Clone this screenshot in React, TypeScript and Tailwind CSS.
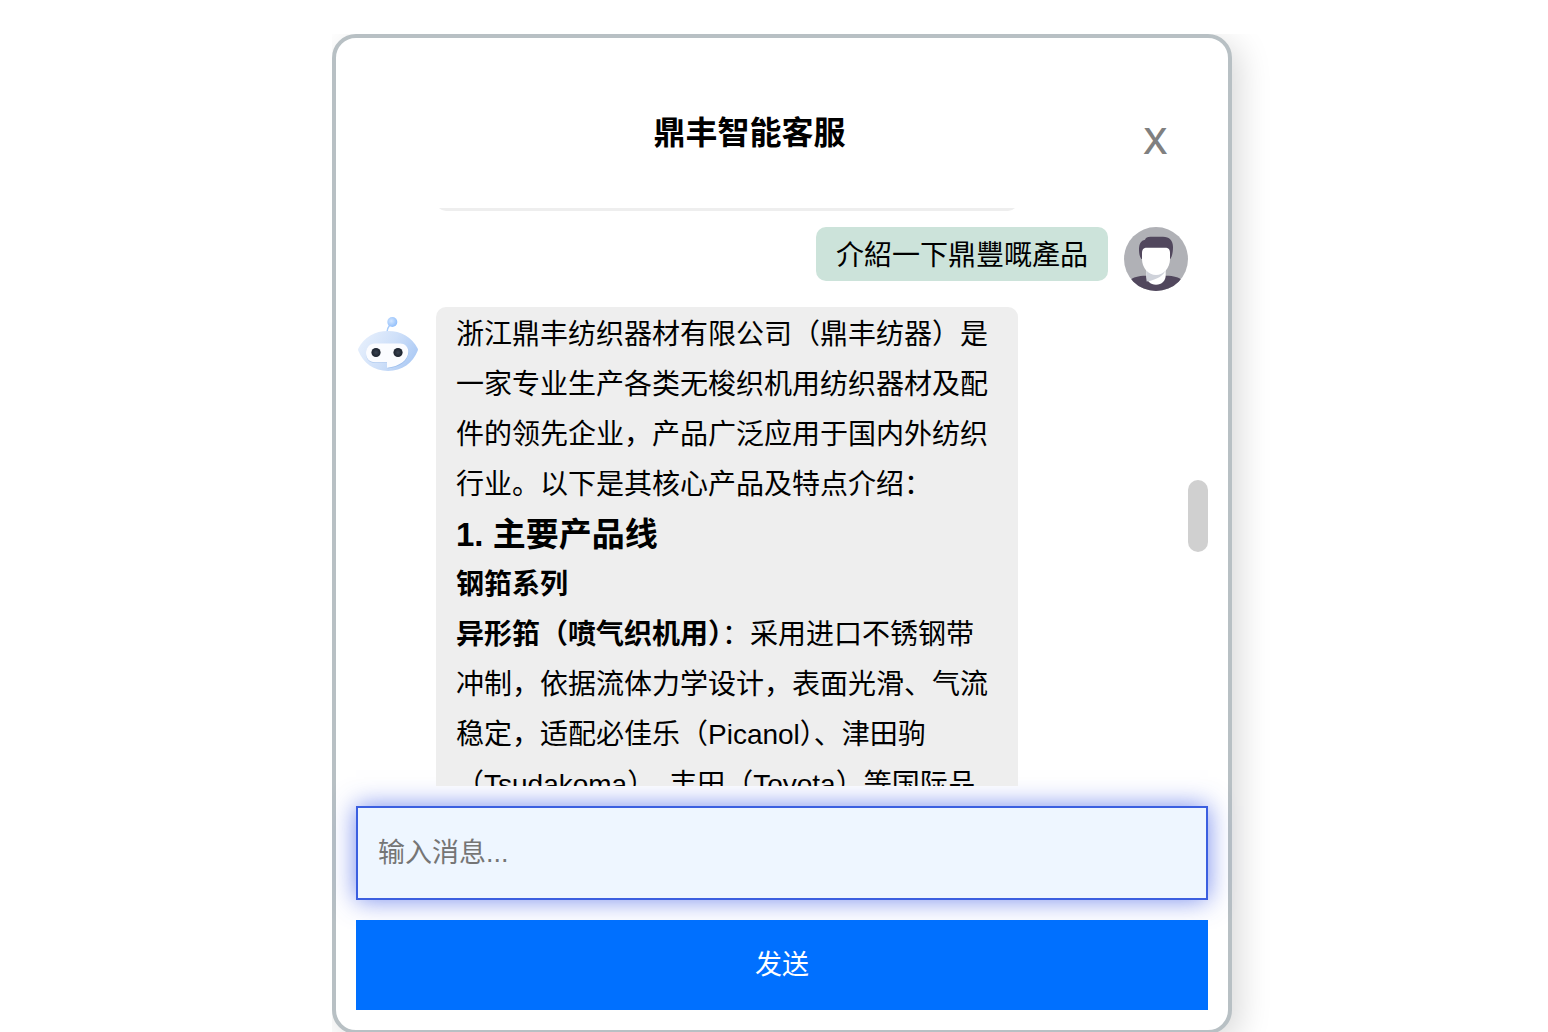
import React, { useState } from 'react';

interface BubbleProps {
  children?: React.ReactNode;
}

const BotAvatar = () => (
  <svg viewBox="0 0 64 64" className="w-16 h-16 shrink-0" role="img" aria-label="客服">
    <defs>
      <linearGradient id="botBody" x1="0" y1="0.3" x2="1" y2="0.7">
        <stop offset="0" stopColor="#e6effc" />
        <stop offset="0.5" stopColor="#cfe0f9" />
        <stop offset="1" stopColor="#a9c8f4" />
      </linearGradient>
      <radialGradient id="botBall" cx="0.4" cy="0.4" r="0.6">
        <stop offset="0" stopColor="#d3e6ff" />
        <stop offset="1" stopColor="#93c0fb" />
      </radialGradient>
      <radialGradient id="botEye">
        <stop offset="0" stopColor="#3a4351" />
        <stop offset="1" stopColor="#1b222d" />
      </radialGradient>
    </defs>
    <path d="M31 25c0-2 .5-4 2.500-6.500" fill="none" stroke="#a9cdfb" strokeWidth="1.500" />
    <circle cx="36.300" cy="15" r="5" fill="url(#botBall)" />
    <path
      d="M2.300 41.500C8 30 19 24 32 24s24 6 29.700 17.500c.4.800.4 1.500 0 2.300C57 56 46 64 32 64S7 56 2.300 43.800c-.4-.8-.4-1.500 0-2.300Z"
      fill="url(#botBody)"
    />
    <path
      d="M19 37h25c5 0 8.500 3.500 8.500 8 0 9-9 15.500-21 16.500v-5.500H19c-5.500 0-9-4-9-9.500S13.500 37 19 37Z"
      fill="#7fa9e3"
      opacity="0.45"
    />
    <path
      d="M19 36.500h25c5 0 8.300 3.500 8.300 8 0 8.700-9 15-21.300 16.200v-5.400H19c-5.500 0-9-4-9-9.300s3.500-9.500 9-9.500Z"
      fill="#fbfcff"
    />
    <circle cx="20" cy="45.500" r="4.600" fill="url(#botEye)" />
    <circle cx="42" cy="45.500" r="4.600" fill="url(#botEye)" />
  </svg>
);

const UserAvatar = () => (
  <svg viewBox="0 0 64 64" className="w-16 h-16 shrink-0" role="img" aria-label="用户">
    <defs>
      <clipPath id="userClip">
        <circle cx="32" cy="32" r="32" />
      </clipPath>
    </defs>
    <g clipPath="url(#userClip)">
      <rect width="64" height="64" fill="#b0b1b6" />
      <path d="M6 53c3-2.500 8-4.300 16-4.300h20c8 0 13 1.800 16 4.300v12H6Z" fill="#51475d" />
      <path d="M22.300 43h19.400v5c0 6-4 9.700-9.700 9.700S22.300 54 22.300 48Z" fill="#fff" />
      <path d="M22.300 43h19.400c-2 5-7.500 9.500-19 11.500-.3-1.500-.4-3-.4-4.500Z" fill="#cfd2da" />
      <path
        d="M17.500 32c-2-2.500-2.500-6-2.500-10 0-5 2-8.500 6-9.300.5-2 2.500-3 5.500-3H39c6.500 0 10 4 10 10.300 0 5-.7 9-2.700 12Z"
        fill="#51475d"
      />
      <path
        d="M18 26c0-3.500 1.500-5.300 5-5.300h18c3.500 0 5 1.800 5 5.300v6c0 9-6.500 16-14 16s-14-7-14-16Z"
        fill="#fff"
      />
    </g>
  </svg>
);

const BotBubble: React.FC<BubbleProps> = ({ children }) => (
  <div className="w-[70%] rounded-[10px] bg-[#eeeeee] px-5 pt-[3px] pb-2 text-[28px] leading-[50px]">
    {children}
  </div>
);

const App: React.FC = () => {
  const [message, setMessage] = useState('');

  return (
    <main className="h-screen overflow-hidden bg-white pt-[34px] pl-4 text-black font-['Liberation_Sans','Noto_Sans_CJK_SC',sans-serif]">
      <section className="mx-auto flex h-[calc(100vh-32px)] w-full max-w-[900px] flex-col rounded-3xl border-4 border-[#b8c0c4] bg-white p-5 shadow-[8px_8px_32px_rgba(0,0,0,0.15)] [clip-path:inset(0_-60px_-60px_0)]">
        {/* Header */}
        <header className="flex h-[150px] shrink-0 items-center pr-10">
          <h1 className="flex-1 text-center text-[32px] font-bold">鼎丰智能客服</h1>
          <button type="button" aria-label="关闭" className="pt-4 font-['Inter',sans-serif] text-4xl font-medium text-[#808080]">
            X
          </button>
        </header>

        {/* Messages */}
        <div className="relative min-h-0 flex-1 overflow-hidden pr-5">
          <div className="flex flex-col gap-4">
            <div className="-mt-[59px] flex pl-20">
              <div className="h-[62px] w-[582px] rounded-[10px] bg-[#eeeeee]" />
            </div>

            <div className="flex items-start justify-end gap-4">
              <p lang="zh-HK" className="rounded-[10px] bg-[#cce3da] px-5 pt-3 pb-2 text-[28px] leading-[34px]">
                介紹一下鼎豐嘅產品
              </p>
              <UserAvatar />
            </div>

            <div className="flex items-start gap-4">
              <BotAvatar />
              <BotBubble>
                <p>
                  浙江鼎丰纺织器材有限公司（鼎丰纺器）是一家专业生产各类无梭织机用纺织器材及配件的领先企业，产品广泛应用于国内外纺织行业。以下是其核心产品及特点介绍：
                </p>
                <h3 className="text-[33px] font-bold leading-[50px]">1. 主要产品线</h3>
                <p className="font-bold">钢筘系列</p>
                <p>
                  <strong>异形筘（喷气织机用）</strong>
                  ：采用进口不锈钢带冲制，依据流体力学设计，表面光滑、气流稳定，适配必佳乐（Picanol）、津田驹（Tsudakoma）、丰田（Toyota）等国际品牌织机。
                </p>
              </BotBubble>
            </div>
          </div>
          {/* Scroll thumb */}
          <div className="absolute right-0 top-[47%] h-[72px] w-5 rounded-full bg-[#d0d0d0]" />
        </div>

        {/* Composer */}
        <form className="mt-5 flex shrink-0 flex-col gap-5" onSubmit={(e) => e.preventDefault()}>
          <input
            type="text"
            aria-label="输入消息"
            placeholder="输入消息..."
            value={message}
            onChange={(e) => setMessage(e.target.value)}
            className="h-[94px] w-full border-2 border-[#3b5fe0] bg-[#eef6ff] px-5 text-[27px] shadow-[0_0_24px_rgba(60,90,230,0.7)] outline-none placeholder:text-[#757575]"
          />
          <button type="submit" className="h-[90px] w-full bg-[#0070ff] text-[27px] text-white">
            发送
          </button>
        </form>
      </section>
    </main>
  );
};

export default App;
